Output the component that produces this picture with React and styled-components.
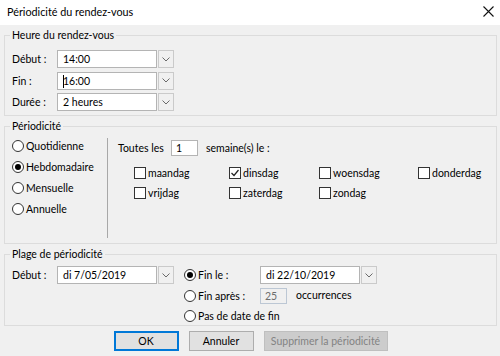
import React from "react";
import styled, { createGlobalStyle } from "styled-components";

const GlobalStyle = createGlobalStyle`
  html, body { margin: 0; padding: 0; }
  body {
    font-family: Lato, "Noto Sans", sans-serif;
    font-size: 10.5px;
    color: #000;
    background: #f0f0f0;
  }
  * { box-sizing: border-box; }
`;

const Window = styled.div`
  width: 500px;
  height: 356px;
  display: flex;
  flex-direction: column;
  overflow: hidden;
  background: #f0f0f0;
`;

const TitleBar = styled.div`
  height: 25px;
  flex: none;
  background: #fff;
  display: flex;
  align-items: center;
  justify-content: space-between;
  padding: 0 6px 2px 7px;
  font-size: 10.8px;
`;

const Body = styled.div`
  flex: 1;
  display: flex;
  flex-direction: column;
  padding: 2px 3px 0 4px;
`;

const Group = styled.fieldset`
  margin: ${(p) => p.$mt || 0}px 0 0 0;
  padding: ${(p) => p.$pt}px 6px ${(p) => p.$pb}px 7px;
  border: 1px solid #dcdcdc;
  min-width: 0;
`;

const Legend = styled.legend`
  padding: 0 2px;
  margin-left: -2px;
  line-height: 16px;
`;

const FieldGrid = styled.div`
  display: grid;
  grid-template-columns: 45px 117px;
  grid-auto-rows: 18px;
  row-gap: 3.5px;
  align-items: center;
`;

const Label = styled.span`
  white-space: nowrap;
  line-height: 16px;
`;

const Combo = styled.div`
  display: flex;
  width: 117px;
  height: 18px;
  gap: 1px;
`;

const Field = styled.div`
  flex: 1;
  background: #fff;
  border: 1px solid #b4b4b4;
  padding: 0 5px;
  line-height: 16px;
  white-space: nowrap;
  overflow: hidden;
`;

const DropBtn = styled.div`
  width: 16px;
  flex: none;
  border: 1px solid #cacaca;
  background: #f0f0f0;
  display: flex;
  align-items: center;
  justify-content: center;
`;

const Caret = styled.span`
  display: inline-block;
  width: 1px;
  height: 13px;
  background: #000;
  vertical-align: -3px;
  margin-right: -1px;
`;

const PeriodRow = styled.div`
  display: flex;
`;

const RadioCol = styled.div`
  width: 96px;
  flex: none;
  display: flex;
  flex-direction: column;
  gap: 5px;
  border-right: 1px solid #a8a8a8;
  margin-bottom: 5px;
`;

const RadioRow = styled.div`
  display: flex;
  align-items: center;
  gap: 2px;
  height: 16px;
  white-space: nowrap;
`;

const RadioDot = styled.span`
  width: 12px;
  height: 12px;
  flex: none;
  border-radius: 50%;
  border: 1px solid #333;
  background: #fff;
  display: flex;
  align-items: center;
  justify-content: center;
  &::after {
    content: "";
    width: 6px;
    height: 6px;
    border-radius: 50%;
    background: ${(p) => (p.$on ? "#000" : "transparent")};
  }
`;

const WeekCol = styled.div`
  padding-left: 10px;
  padding-top: 2px;
  display: flex;
  flex-direction: column;
`;

const EveryRow = styled.div`
  display: flex;
  align-items: center;
  height: 16px;
`;

const EveryLabel = styled.span`
  width: 53px;
  flex: none;
  white-space: nowrap;
`;

const SmallInput = styled.div`
  width: 27px;
  height: 16px;
  flex: none;
  border: 1px solid ${(p) => (p.$disabled ? "#bcc7d4" : "#b4b4b4")};
  background: ${(p) => (p.$disabled ? "#f0f0f0" : "#fff")};
  color: ${(p) => (p.$disabled ? "#6d6d6d" : "#000")};
  padding: 0 4px;
  line-height: 14px;
  margin: 0 ${(p) => p.$mr || 0}px 0 ${(p) => p.$ml || 0}px;
`;

const DayGrid = styled.div`
  display: grid;
  grid-template-columns: 95px 90px 99px auto;
  grid-auto-rows: 16px;
  row-gap: 4px;
  margin: 9px 0 0 16px;
`;

const CheckRow = styled.div`
  display: flex;
  align-items: center;
  gap: 2px;
  white-space: nowrap;
`;

const CheckBox = styled.span`
  width: 12px;
  height: 12px;
  flex: none;
  border: 1px solid #333;
  background: #fff;
  display: flex;
  align-items: center;
  justify-content: center;
`;

const RangeRow = styled.div`
  display: flex;
  align-items: flex-start;
`;

const RangeLabel = styled.span`
  width: 45px;
  line-height: 18px;
  flex: none;
`;

const EndGrid = styled.div`
  margin-left: 10px;
  display: grid;
  grid-template-columns: 76px auto;
  grid-template-rows: 18px 16px 16px;
  row-gap: 4px;
  align-items: center;
`;

const EndCell = styled.div`
  display: flex;
  align-items: center;
  grid-column: ${(p) => p.$span || "auto"};
`;

const Occ = styled.span`
  margin-top: -3px;
`;

const ButtonRow = styled.div`
  display: flex;
  justify-content: center;
  gap: 10px;
  margin-top: 5px;
`;

const Button = styled.div`
  width: ${(p) => p.$w}px;
  height: 20px;
  display: flex;
  align-items: center;
  justify-content: center;
  background: ${(p) => (p.$disabled ? "#cccccc" : "#e1e1e1")};
  border: 1px solid
    ${(p) => (p.$primary ? "#0078d7" : p.$disabled ? "#bfbfbf" : "#adadad")};
  box-shadow: ${(p) => (p.$primary ? "inset 0 0 0 1px #0078d7" : "none")};
  color: ${(p) => (p.$disabled ? "#838383" : "#000")};
  white-space: nowrap;
`;

const Chevron = () => (
  <svg width="8" height="5" viewBox="0 0 8 5">
    <path d="M0.5 0.5 L4 4 L7.5 0.5" fill="none" stroke="#6a6a6a" strokeWidth="1" />
  </svg>
);

const CloseIcon = () => (
  <svg width="11" height="11" viewBox="0 0 11 11">
    <path d="M0.5 0.5 L10.5 10.5 M10.5 0.5 L0.5 10.5" stroke="#111" strokeWidth="1.1" />
  </svg>
);

const Check = () => (
  <svg width="10" height="10" viewBox="0 0 10 10">
    <path d="M1.5 5 L4 7.5 L8.5 2" fill="none" stroke="#222" strokeWidth="1.2" />
  </svg>
);

const ComboBox = ({ value, caret }) => (
  <Combo>
    <Field>
      {caret && <Caret />}
      {value}
    </Field>
    <DropBtn>
      <Chevron />
    </DropBtn>
  </Combo>
);

const Radio = ({ on, children }) => (
  <RadioRow>
    <RadioDot $on={on} />
    <span>{children}</span>
  </RadioRow>
);

const Day = ({ on, children }) => (
  <CheckRow>
    <CheckBox>{on && <Check />}</CheckBox>
    <span>{children}</span>
  </CheckRow>
);

export default function App() {
  return (
    <Window>
      <GlobalStyle />
      <TitleBar>
        <span>Périodicité du rendez-vous</span>
        <CloseIcon />
      </TitleBar>
      <Body>
        <Group $pt={7} $pb={4}>
          <Legend>Heure du rendez-vous</Legend>
          <FieldGrid>
            <Label>Début :</Label>
            <ComboBox value="14:00" />
            <Label>Fin :</Label>
            <ComboBox value="16:00" caret />
            <Label>Durée :</Label>
            <ComboBox value="2 heures" />
          </FieldGrid>
        </Group>

        <Group $mt={2} $pt={4} $pb={0}>
          <Legend>Périodicité</Legend>
          <PeriodRow>
            <RadioCol>
              <Radio>Quotidienne</Radio>
              <Radio on>Hebdomadaire</Radio>
              <Radio>Mensuelle</Radio>
              <Radio>Annuelle</Radio>
              <RadioRow />
            </RadioCol>
            <WeekCol>
              <EveryRow>
                <EveryLabel>Toutes les</EveryLabel>
                <SmallInput $mr={8}>1</SmallInput>
                <span>semaine(s) le :</span>
              </EveryRow>
              <DayGrid>
                <Day>maandag</Day>
                <Day on>dinsdag</Day>
                <Day>woensdag</Day>
                <Day>donderdag</Day>
                <Day>vrijdag</Day>
                <Day>zaterdag</Day>
                <Day>zondag</Day>
              </DayGrid>
            </WeekCol>
          </PeriodRow>
        </Group>

        <Group $mt={2} $pt={4} $pb={1}>
          <Legend>Plage de périodicité</Legend>
          <RangeRow>
            <RangeLabel>Début :</RangeLabel>
            <ComboBox value="di 7/05/2019" />
            <EndGrid>
              <Radio on>Fin le :</Radio>
              <ComboBox value="di 22/10/2019" />
              <Radio>Fin après :</Radio>
              <EndCell>
                <SmallInput $disabled $mr={9}>25</SmallInput>
                <Occ>occurrences</Occ>
              </EndCell>
              <EndCell $span="1 / span 2">
                <Radio>Pas de date de fin</Radio>
              </EndCell>
            </EndGrid>
          </RangeRow>
        </Group>

        <ButtonRow>
          <Button $w={65} $primary>OK</Button>
          <Button $w={65}>Annuler</Button>
          <Button $w={124} $disabled>Supprimer la périodicité</Button>
        </ButtonRow>
      </Body>
    </Window>
  );
}
